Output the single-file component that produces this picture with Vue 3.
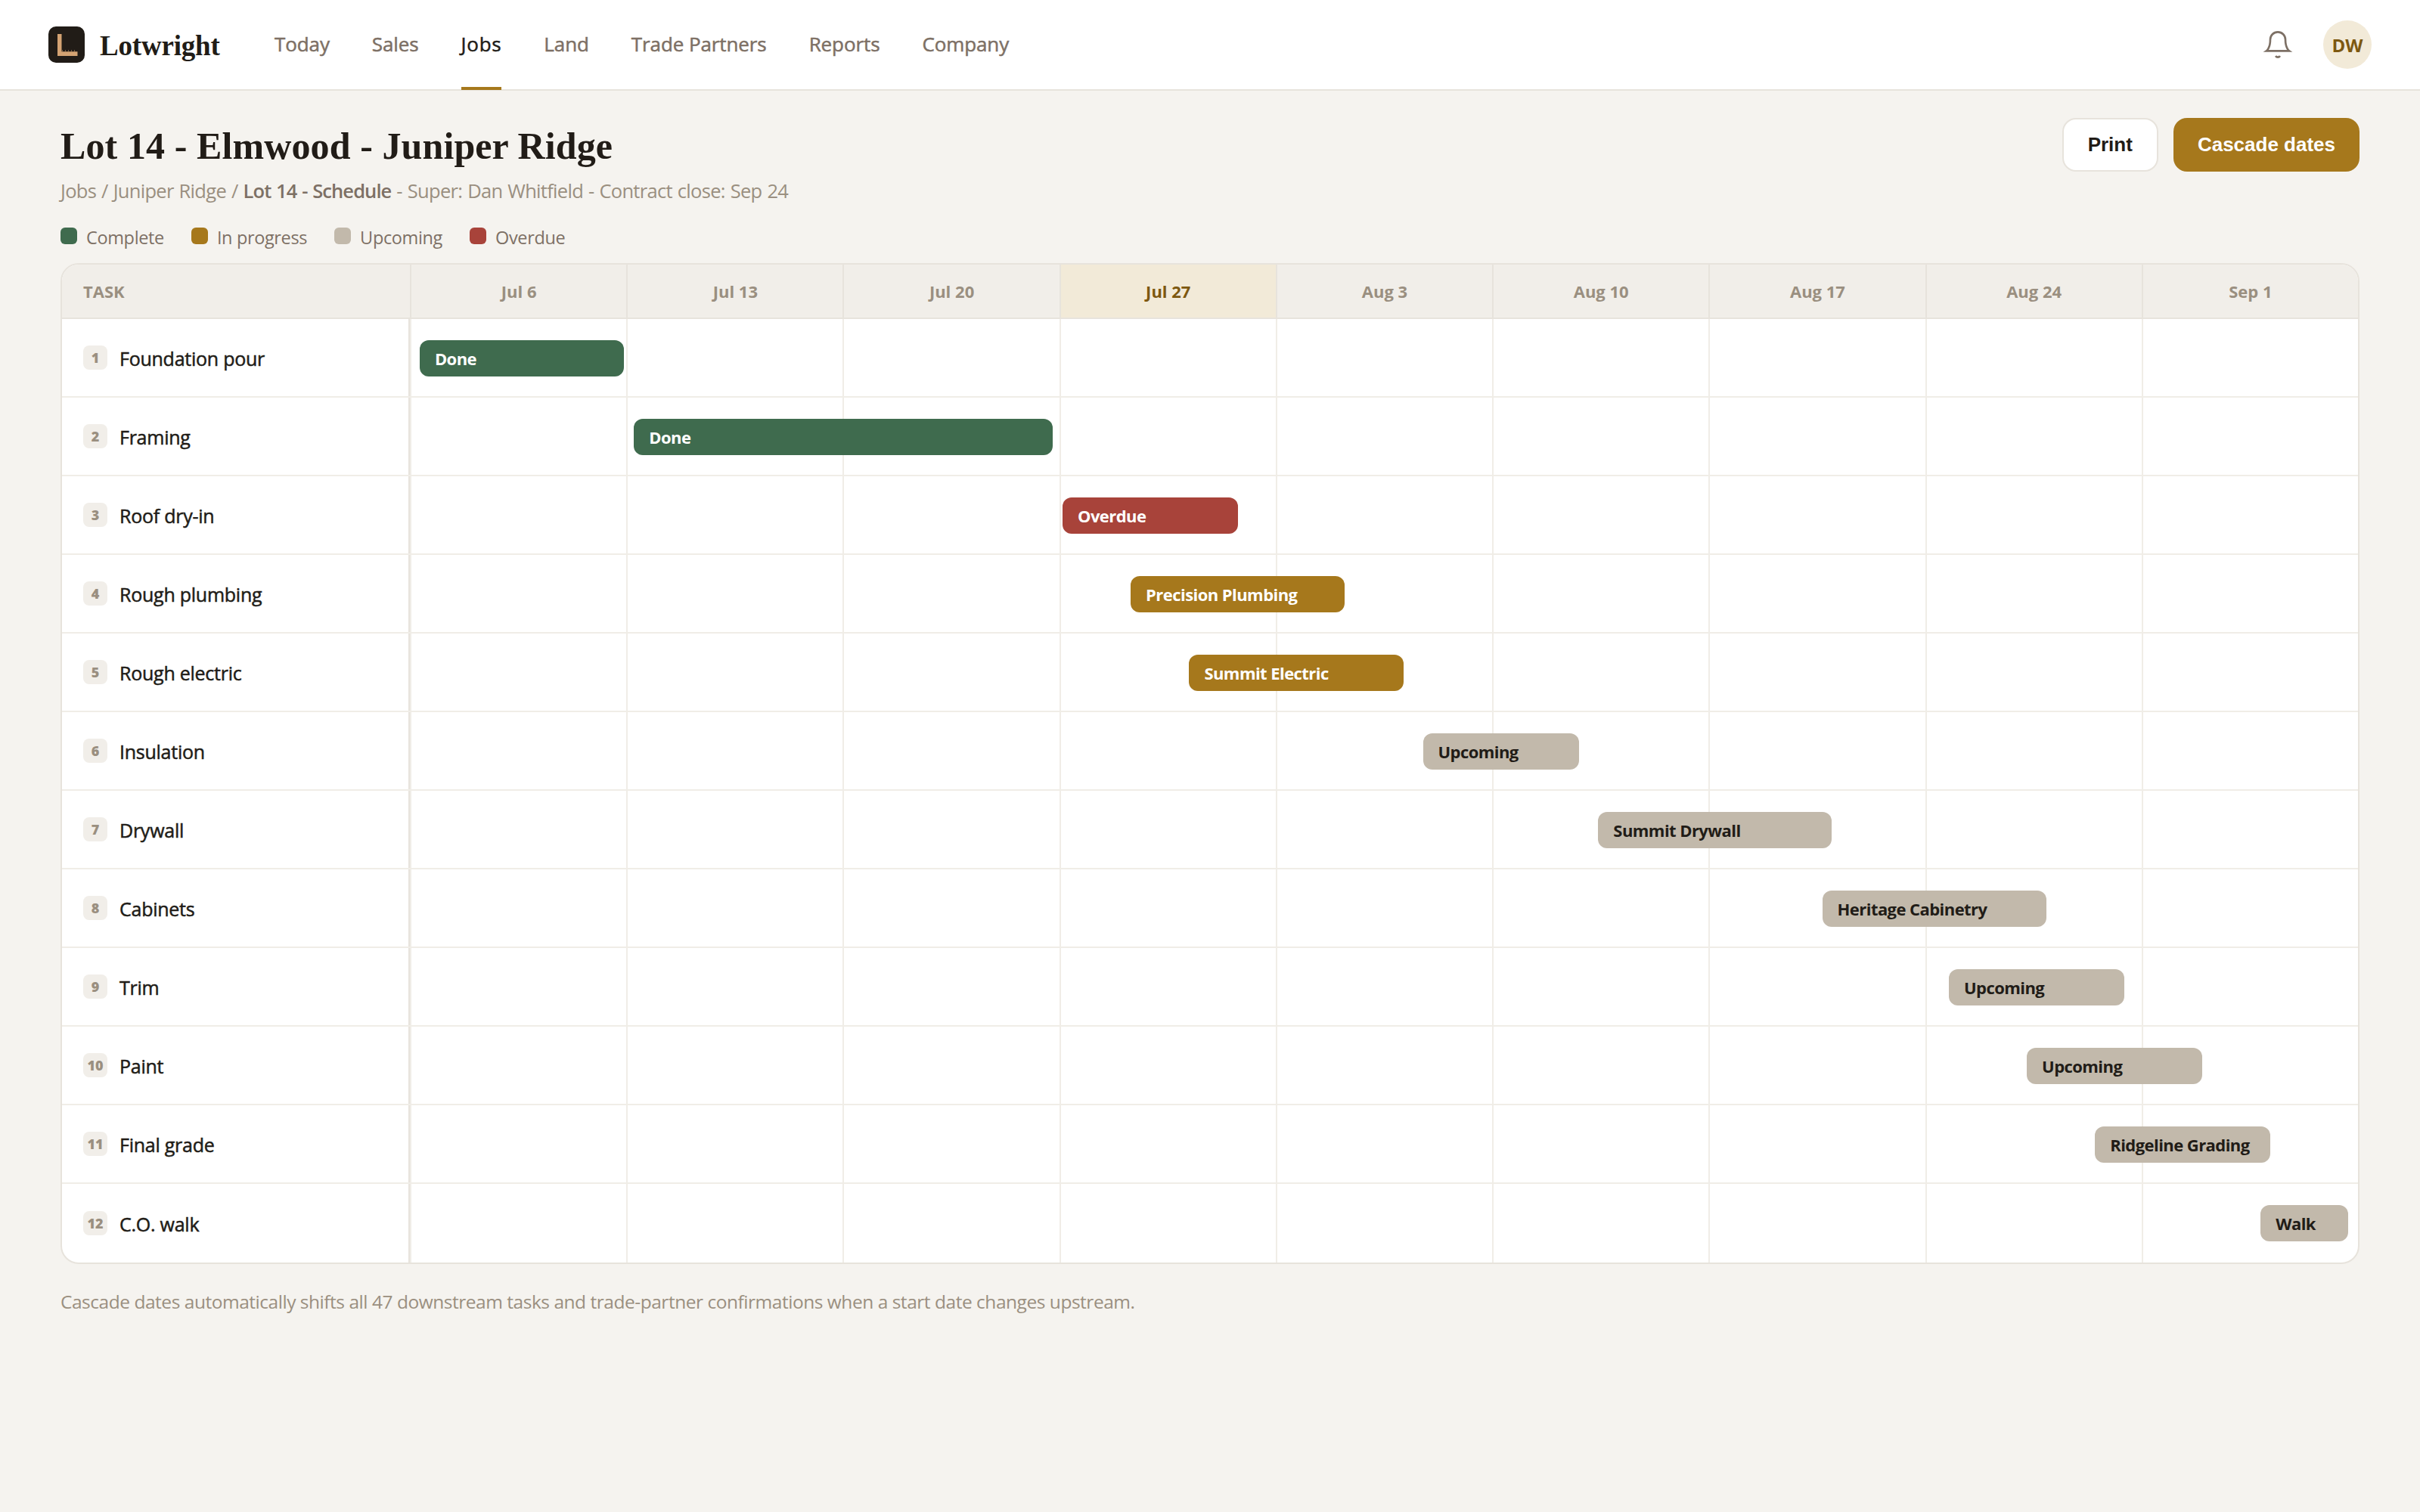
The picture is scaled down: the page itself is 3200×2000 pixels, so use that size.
<template>
  <div class="app">
    <header class="topbar">
      <div class="brand">
        <svg class="brand-mark" viewBox="0 0 48 48" aria-hidden="true">
          <rect width="48" height="48" rx="10" fill="#211c17" />
          <path d="M12 10h5.500v23.200h21V39H12z" fill="#d4a373" />
          <path d="M18.500 31v2.200M22.500 31v2.200M26.500 31v2.200M30.500 31v2.200M34.500 31v2.200" stroke="#d4a373" stroke-width="1" opacity="0.5" />
        </svg>
        <span class="brand-name">Lotwright</span>
      </div>
      <nav class="nav">
        <a
          v-for="item in navItems"
          :key="item"
          class="nav-link"
          :class="{ active: item === 'Jobs' }"
        >{{ item }}</a>
      </nav>
      <div class="topbar-right">
        <svg class="bell" viewBox="0 0 24 24" fill="none" stroke="#7d7065" stroke-width="1.600">
          <path d="M18 8A6 6 0 0 0 6 8c0 7-3 9-3 9h18s-3-2-3-9" />
          <path d="M13.730 21a2 2 0 0 1-3.460 0" />
        </svg>
        <span class="avatar">DW</span>
      </div>
    </header>

    <main class="page">
      <div class="page-head">
        <div>
          <h1 class="title">Lot 14 - Elmwood - Juniper Ridge</h1>
          <p class="crumbs">Jobs / Juniper Ridge / <b>Lot 14 - Schedule</b> - Super: Dan Whitfield - Contract close: Sep 24</p>
        </div>
        <div class="actions">
          <button class="btn">Print</button>
          <button class="btn primary">Cascade dates</button>
        </div>
      </div>

      <div class="legend">
        <span v-for="l in legend" :key="l.label" class="legend-item">
          <i class="swatch" :class="l.status"></i>
          <span class="legend-label">{{ l.label }}</span>
        </span>
      </div>

      <div class="gantt">
        <div class="gantt-head">
          <div class="head-task">TASK</div>
          <div class="weeks">
            <div v-for="w in weeks" :key="w" class="head-week" :class="{ now: w === 'Jul 27' }">{{ w }}</div>
          </div>
        </div>
        <div v-for="(t, i) in tasks" :key="t.name" class="row">
          <div class="task">
            <span class="num">{{ i + 1 }}</span>
            <span class="task-name">{{ t.name }}</span>
          </div>
          <div class="weeks track">
            <div v-for="w in weeks" :key="w" class="cell"></div>
            <div class="bar" :class="t.status" :style="{ left: t.start + '%', width: t.span + '%' }">
              <span>{{ t.label }}</span>
            </div>
          </div>
        </div>
      </div>

      <p class="note">Cascade dates automatically shifts all 47 downstream tasks and trade-partner confirmations when a start date changes upstream.</p>
    </main>
  </div>
</template>

<script setup>
const navItems = ['Today', 'Sales', 'Jobs', 'Land', 'Trade Partners', 'Reports', 'Company']

const legend = [
  { label: 'Complete', status: 'done' },
  { label: 'In progress', status: 'progress' },
  { label: 'Upcoming', status: 'upcoming' },
  { label: 'Overdue', status: 'overdue' }
]

const weeks = ['Jul 6', 'Jul 13', 'Jul 20', 'Jul 27', 'Aug 3', 'Aug 10', 'Aug 17', 'Aug 24', 'Sep 1']

// start and span are percentages of the whole timeline
const tasks = [
  { name: 'Foundation pour', label: 'Done', status: 'done', start: 0.5, span: 10.5 },
  { name: 'Framing', label: 'Done', status: 'done', start: 11.5, span: 21.5 },
  { name: 'Roof dry-in', label: 'Overdue', status: 'overdue', start: 33.5, span: 9 },
  { name: 'Rough plumbing', label: 'Precision Plumbing', status: 'progress', start: 37, span: 11 },
  { name: 'Rough electric', label: 'Summit Electric', status: 'progress', start: 40, span: 11 },
  { name: 'Insulation', label: 'Upcoming', status: 'upcoming', start: 52, span: 8 },
  { name: 'Drywall', label: 'Summit Drywall', status: 'upcoming', start: 61, span: 12 },
  { name: 'Cabinets', label: 'Heritage Cabinetry', status: 'upcoming', start: 72.5, span: 11.5 },
  { name: 'Trim', label: 'Upcoming', status: 'upcoming', start: 79, span: 9 },
  { name: 'Paint', label: 'Upcoming', status: 'upcoming', start: 83, span: 9 },
  { name: 'Final grade', label: 'Ridgeline Grading', status: 'upcoming', start: 86.5, span: 9 },
  { name: 'C.O. walk', label: 'Walk', status: 'upcoming', start: 95, span: 4.5 }
]
</script>

<style>
body {
  background: #f5f3ef;
}
</style>

<style scoped>
.app {
  min-height: 2000px;
  background: #f5f3ef;
  color: #211c17;
  font-family: "Segoe UI", "Open Sans", "Noto Sans", sans-serif;
  font-size: 26px;
}

.topbar {
  display: flex;
  align-items: center;
  box-sizing: border-box;
  height: 120px;
  padding: 0 64px;
  background: #fff;
  border-bottom: 2px solid #e7e3dc;
}

.brand {
  display: flex;
  align-items: center;
  gap: 20px;
  width: 299px;
}

.brand-mark {
  width: 48px;
  height: 48px;
}

.brand-name {
  padding-top: 2px;
  font-family: "Palatino Linotype", "Liberation Serif", serif;
  font-size: 37px;
  font-weight: 700;
  letter-spacing: -0.2px;
}

.nav {
  display: flex;
  gap: 56px;
  height: 118px;
}

.nav-link {
  position: relative;
  line-height: 116px;
  color: #7d7065;
  font-weight: 500;
  letter-spacing: -0.1px;
  white-space: nowrap;
  -webkit-text-stroke: 0.5px currentColor;
}

.nav-link.active {
  color: #211c17;
  letter-spacing: 0.7px;
}

.nav-link.active::after {
  content: '';
  position: absolute;
  left: 0;
  right: 0;
  bottom: -1px;
  height: 4px;
  background: #a6781c;
}

.topbar-right {
  display: flex;
  align-items: center;
  gap: 40px;
  margin-left: auto;
}

.bell {
  width: 40px;
  height: 40px;
}

.avatar {
  width: 64px;
  height: 64px;
  border-radius: 50%;
  background: #f2ead8;
  color: #7d5810;
  font-size: 24px;
  font-weight: 700;
  line-height: 65px;
  text-align: center;
}

.page {
  padding: 36px 80px 0;
}

.page-head {
  display: flex;
  justify-content: space-between;
  align-items: flex-start;
  height: 116px;
}

.title {
  margin: 0;
  font-family: "Palatino Linotype", "Liberation Serif", serif;
  font-size: 50px;
  font-weight: 700;
  letter-spacing: 0.1px;
  line-height: 75px;
  white-space: nowrap;
}

.crumbs {
  margin: 3px 0 0;
  color: #9a8f80;
  font-size: 25.5px;
  letter-spacing: -0.7px;
  word-spacing: 1px;
  line-height: 36px;
  white-space: nowrap;
}

.crumbs b {
  color: #7d7065;
  font-weight: 600;
  letter-spacing: -0.9px;
}

.actions {
  display: flex;
  gap: 20px;
}

.btn {
  box-sizing: border-box;
  height: 71px;
  padding: 0 32px;
  border: 2px solid #e7e3dc;
  border-radius: 18px;
  background: #fff;
  color: #211c17;
  font-family: "Liberation Sans", Arial, sans-serif;
  font-size: 26px;
  font-weight: 700;
}

.btn.primary {
  border: none;
  background: #a6781c;
  color: #fff;
}

.legend {
  display: flex;
  gap: 36px;
  height: 76px;
  padding-top: 25px;
  box-sizing: border-box;
}

.legend-item {
  display: flex;
  gap: 12px;
  height: 30px;
  color: #7d7065;
  font-size: 23.5px;
  letter-spacing: -0.36px;
}

.legend-label {
  line-height: 34px;
}

.swatch {
  width: 22px;
  height: 22px;
  margin-top: 4px;
  border-radius: 6px;
}

.gantt {
  overflow: hidden;
  border: 2px solid #e7e3dc;
  border-radius: 24px;
  background: #fff;
}

.gantt-head {
  display: grid;
  grid-template-columns: 460px 1fr;
  height: 70px;
  border-bottom: 2px solid #e7e3dc;
  background: #f1eee9;
  color: #9a8f80;
  font-size: 22px;
  font-weight: 700;
  line-height: 70px;
}

.head-task {
  padding-left: 28px;
}

.weeks {
  display: grid;
  grid-template-columns: repeat(9, 1fr);
}

.head-week {
  border-left: 2px solid #e7e3dc;
  text-align: center;
}

.head-week.now {
  background: #f2ead8;
  color: #7d5810;
}

.row {
  display: grid;
  grid-template-columns: 460px 1fr;
  box-sizing: border-box;
  height: 104px;
  border-bottom: 2px solid #f0ede7;
}

.row:last-child {
  border-bottom: none;
}

.task {
  display: flex;
  align-items: center;
  gap: 16px;
  padding-left: 28px;
  border-right: 2px solid #e7e3dc;
}

.num {
  width: 32px;
  height: 32px;
  border-radius: 8px;
  background: #f1eee9;
  color: #9a8f80;
  font-size: 18px;
  font-weight: 800;
  line-height: 33px;
  text-align: center;
}

.task-name {
  padding-top: 2px;
  font-size: 25px;
  font-weight: 500;
  letter-spacing: -0.25px;
  line-height: 36px;
  -webkit-text-stroke: 0.5px currentColor;
}

.track {
  position: relative;
}

.cell {
  border-left: 2px solid #f0ede7;
}

.bar {
  position: absolute;
  top: 28px;
  box-sizing: border-box;
  height: 48px;
  padding: 0 20px;
  border-radius: 12px;
  color: #fff;
  font-size: 22px;
  font-weight: 700;
  letter-spacing: -0.56px;
  line-height: 49px;
  white-space: nowrap;
}

.done {
  background: #3f6b4e;
}

.progress {
  background: #a6781c;
}

.overdue {
  background: #a8433a;
}

.upcoming {
  background: #c2b9ab;
}

.bar.upcoming {
  color: #211c17;
}

.note {
  margin: 32px 0 0;
  color: #9a8f80;
  font-size: 24.5px;
  letter-spacing: -0.47px;
  line-height: 36px;
}
</style>
